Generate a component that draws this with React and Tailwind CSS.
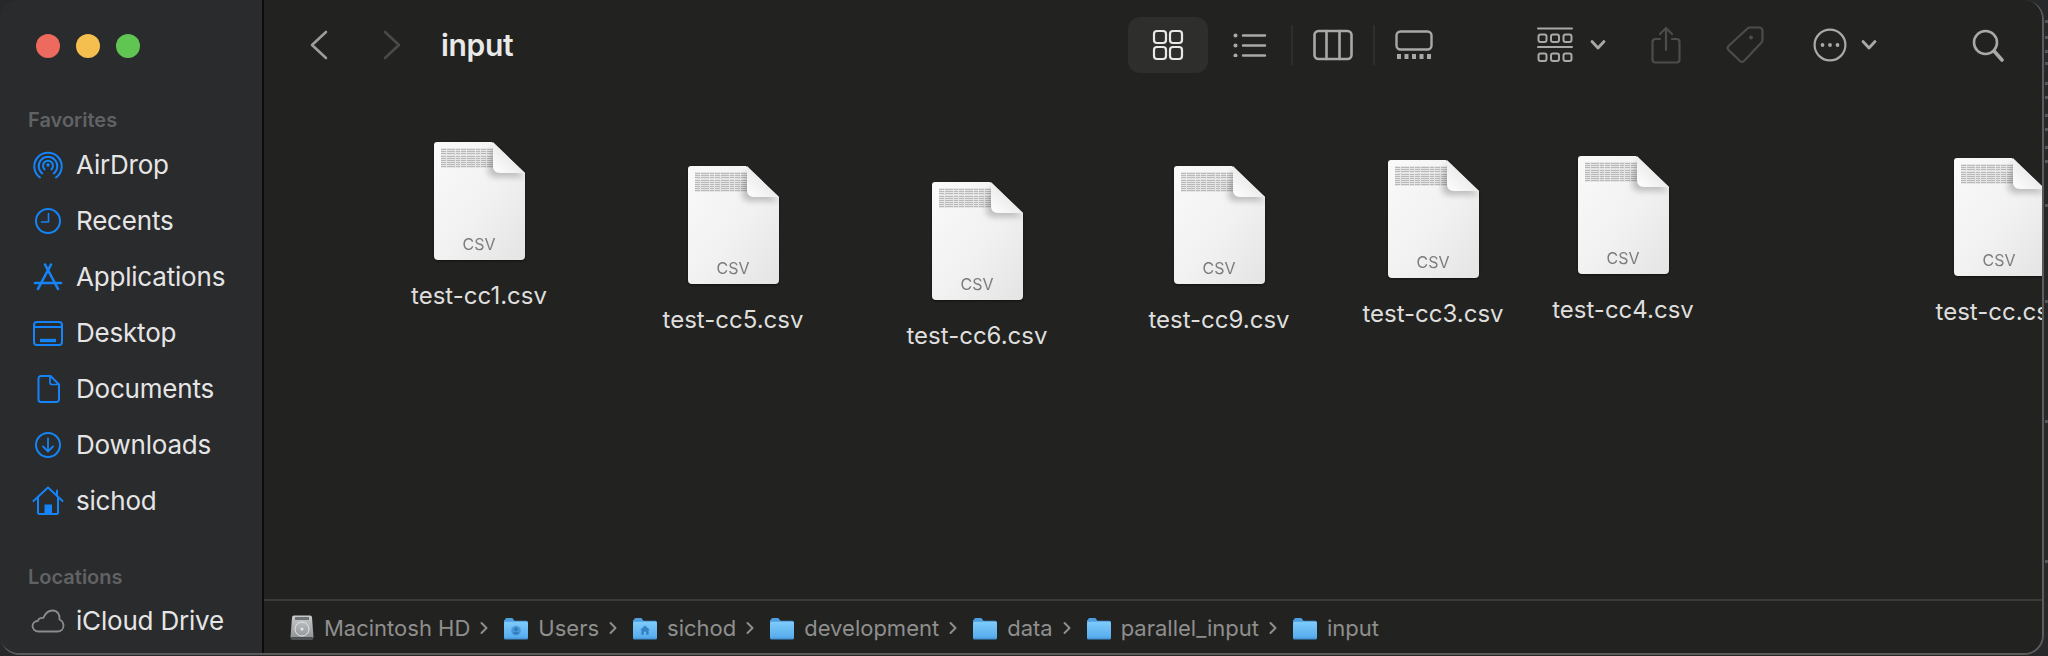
import React from "react";

const BLUE = "#1484f8";
const s = { fill: "none", stroke: "currentColor", strokeLinecap: "round", strokeLinejoin: "round" };

const AirDrop = () => (
  <svg width="30" height="30" viewBox="0 0 30 30" style={{ color: BLUE }} {...s} strokeWidth="2">
    <path d="M7 27.5A13.7 13.7 0 1 1 23 27.5" />
    <path d="M9.3 23.5A9.3 9.3 0 1 1 20.7 23.5" />
    <path d="M11.6 19.4A5 5 0 1 1 18.4 19.4" />
    <circle cx="15" cy="15" r="1.7" fill="currentColor" stroke="none" />
  </svg>
);
const Recents = () => (
  <svg width="30" height="30" viewBox="0 0 30 30" style={{ color: BLUE }} {...s} strokeWidth="2">
    <circle cx="15" cy="15" r="12" />
    <path d="M15.5 7.5V16H8.5" strokeWidth="1.6" />
  </svg>
);
const Apps = () => (
  <svg width="30" height="30" viewBox="0 0 30 30" style={{ color: BLUE }} {...s} strokeWidth="2.6">
    <path d="M12 2.5L24 25" />
    <path d="M18 2.5L6 25" />
    <path d="M2 21H28" />
    <path d="M5 27L6 25" />
    <path d="M25 27L24 25" />
  </svg>
);
const Desktop = () => (
  <svg width="30" height="30" viewBox="0 0 30 30" style={{ color: BLUE }} {...s} strokeWidth="2">
    <rect x="1" y="4" width="28" height="23" rx="3" />
    <path d="M1 9H29" />
    <path d="M7 22.5H23" strokeWidth="3.4" strokeLinecap="butt" />
  </svg>
);
const Doc = () => (
  <svg width="30" height="30" viewBox="0 0 30 30" style={{ color: BLUE }} {...s} strokeWidth="2">
    <path d="M8 2H17.5L26 10.5V25.5A2.5 2.5 0 0 1 23.5 28H8A2.5 2.5 0 0 1 5.5 25.5V4.5A2.5 2.5 0 0 1 8 2Z" />
    <path d="M17 2.5V8.5A2 2 0 0 0 19 10.5H25.5" strokeWidth="1.7" />
  </svg>
);
const Down = () => (
  <svg width="30" height="30" viewBox="0 0 30 30" style={{ color: BLUE }} {...s} strokeWidth="2">
    <circle cx="15" cy="15" r="12" />
    <path d="M15 8.5V21M10 16.5L15 21.5L20 16.5" strokeWidth="1.8" />
  </svg>
);
const Home = () => (
  <svg width="32" height="30" viewBox="0 0 32 30" style={{ color: BLUE }} {...s} strokeWidth="2">
    <path d="M1.5 15L16 1.5L30.5 15" />
    <path d="M25 4.5V10" />
    <path d="M6 12V26.5A1.5 1.5 0 0 0 7.5 28H24.5A1.5 1.5 0 0 0 26 26.5V12" />
    <rect x="12.5" y="18.5" width="7.5" height="9.5" fill="currentColor" stroke="none" />
  </svg>
);
const Cloud = () => (
  <svg width="34" height="26" viewBox="0 0 34 26" style={{ color: "#8b8c8e" }} {...s} strokeWidth="1.8">
    <path d="M7.5 23.5C4 23.5 1.5 21 1.5 18C1.5 15 4 12.8 6.8 13C7.6 10.4 10 9.3 12.2 10C14 6 17 2.5 21.5 2.5C26.5 2.5 29 6.5 28.5 11.5C31 12.8 32.5 15 32.5 17.8C32.5 21 30 23.5 26.5 23.5Z" />
  </svg>
);

const Row = ({ icon, label }) => (
  <div className="h-[56px] flex items-center">
    <div className="w-[76px] flex items-center justify-center pl-[20px] shrink-0">{icon}</div>
    <span className="text-[26px] leading-none text-[#e5e5e6] tracking-[-0.2px]">{label}</span>
  </div>
);

const Heading = ({ children, className }) => (
  <div className={`pl-[28px] text-[20px] leading-[24px] font-semibold text-[#616264] ${className}`}>{children}</div>
);

const Sidebar = () => (
  <aside className="w-[262px] shrink-0 bg-[#2a2b2d] flex flex-col">
    <div className="flex gap-[16px] pl-[36px] pt-[34px]">
      <span className="w-[24px] h-[24px] rounded-full bg-[#ec6a5e]" />
      <span className="w-[24px] h-[24px] rounded-full bg-[#f4bf4f]" />
      <span className="w-[24px] h-[24px] rounded-full bg-[#61c554]" />
    </div>
    <Heading className="mt-[50px]">Favorites</Heading>
    <div className="mt-[5px]">
      <Row icon={<AirDrop />} label="AirDrop" />
      <Row icon={<Recents />} label="Recents" />
      <Row icon={<Apps />} label="Applications" />
      <Row icon={<Desktop />} label="Desktop" />
      <Row icon={<Doc />} label="Documents" />
      <Row icon={<Down />} label="Downloads" />
      <Row icon={<Home />} label="sichod" />
    </div>
    <Heading className="mt-[36px]">Locations</Heading>
    <div className="mt-[4px]">
      <Row icon={<Cloud />} label="iCloud Drive" />
    </div>
  </aside>
);

const G = "#a9a9a8";
const Ic = ({ w, h, ml, color = G, sw = 2.4, children }) => (
  <svg width={w} height={h} viewBox={`0 0 ${w} ${h}`} className="shrink-0" style={{ color, marginLeft: ml }} {...s} strokeWidth={sw}>
    {children}
  </svg>
);

const Chev = ({ ml }) => (
  <Ic w={16} h={12} ml={ml} sw={2.8}>
    <path d="M2 2.5L8 9L14 2.5" />
  </Ic>
);

const Sep = ({ ml }) => <span className="w-[2px] h-[40px] bg-[#2e2e2d] shrink-0" style={{ marginLeft: ml }} />;

const Toolbar = () => (
  <div className="h-[90px] shrink-0 flex items-center relative">
    <Ic w={20} h={30} ml={45} color="#9c9c9b" sw={2.6}><path d="M17 2L3 15L17 28" /></Ic>
    <Ic w={20} h={30} ml={53} color="#4a4a49" sw={2.6}><path d="M3 2L17 15L3 28" /></Ic>
    <span className="ml-[39px] text-[30px] leading-none font-semibold text-[#e9e9e8] tracking-[-0.3px]">input</span>
    <div className="ml-[615px] w-[80px] h-[56px] rounded-[12px] bg-[#2e2e2d] flex items-center justify-center shrink-0">
      <Ic w={32} h={32} color="#e8e8e7" sw={2.2}>
        <rect x="2" y="2" width="12" height="12" rx="3" />
        <rect x="18" y="2" width="12" height="12" rx="3" />
        <rect x="2" y="18" width="12" height="12" rx="3" />
        <rect x="18" y="18" width="12" height="12" rx="3" />
      </Ic>
    </div>
    <Ic w={34} h={24} ml={25}>
      <circle cx="2.5" cy="2.5" r="2" fill="currentColor" stroke="none" />
      <circle cx="2.5" cy="12.5" r="2" fill="currentColor" stroke="none" />
      <circle cx="2.5" cy="22.5" r="2" fill="currentColor" stroke="none" />
      <path d="M10 2.5H32M10 12.5H32M10 22.5H32" />
    </Ic>
    <Sep ml={24} />
    <Ic w={40} h={32} ml={20} sw={2.6}>
      <rect x="1.5" y="2" width="37" height="28" rx="4" />
      <path d="M13.5 2V30M26.5 2V30" />
    </Ic>
    <Sep ml={20} />
    <Ic w={38} h={30} ml={20} sw={2.4}>
      <rect x="1.5" y="1.5" width="35" height="18" rx="4" />
      <path d="M2 26.5H6M9.5 26.5H13.5M17 26.5H21M24.5 26.5H28.5M32 26.5H36" strokeWidth="5" strokeLinecap="butt" />
    </Ic>
    <Ic w={36} h={36} ml={104} sw={2}>
      <path d="M1 1.5H35M1 20H35" />
      <rect x="1.5" y="7.5" width="8" height="7.5" rx="2" />
      <rect x="14" y="7.5" width="8" height="7.5" rx="2" />
      <rect x="26.5" y="7.5" width="8" height="7.5" rx="2" />
      <rect x="1.5" y="26.5" width="8" height="7.5" rx="2" />
      <rect x="14" y="26.5" width="8" height="7.5" rx="2" />
      <rect x="26.5" y="26.5" width="8" height="7.5" rx="2" />
    </Ic>
    <Chev ml={17} />
    <Ic w={30} h={38} ml={45} color="#4c4c4b" sw={2.2}>
      <path d="M9 13H4.5A3 3 0 0 0 1.5 16V33.5A3 3 0 0 0 4.5 36.5H25.5A3 3 0 0 0 28.5 33.5V16A3 3 0 0 0 25.5 13H21" />
      <path d="M15 24V2.5M9 8L15 2L21 8" />
    </Ic>
    <Ic w={38} h={38} ml={45} color="#4c4c4b" sw={2.2}>
      <path d="M24 1.5H33A3.5 3.5 0 0 1 36.5 5V14A3.5 3.5 0 0 1 35.5 16.5L18 35A3 3 0 0 1 14 35L2.5 24A3 3 0 0 1 2.5 20L21.5 2.5A3.5 3.5 0 0 1 24 1.5Z" />
      <circle cx="25" cy="11.5" r="2" fill="currentColor" stroke="none" />
    </Ic>
    <Ic w={34} h={34} ml={49} sw={2.2}>
      <circle cx="17" cy="17" r="15.4" />
      <circle cx="9.5" cy="17" r="1.9" fill="currentColor" stroke="none" />
      <circle cx="17" cy="17" r="1.9" fill="currentColor" stroke="none" />
      <circle cx="24.5" cy="17" r="1.9" fill="currentColor" stroke="none" />
    </Ic>
    <Chev ml={14} />
    <Ic w={32} h={33} ml={95} sw={2.6}>
      <circle cx="13.5" cy="13.5" r="11.5" />
      <path d="M22 22L30 31" strokeWidth="3.6" />
    </Ic>
  </div>
);

const CsvIcon = () => (
  <div className="relative w-[91px] h-[118px]">
    <svg width="91" height="118" viewBox="0 0 91 118" className="block">
      <defs>
        <linearGradient id="pg" x1="0" y1="0" x2="1" y2="1">
          <stop offset="0" stopColor="#fafafa" />
          <stop offset="0.55" stopColor="#f1f1f1" />
          <stop offset="1" stopColor="#e4e4e4" />
        </linearGradient>
        <linearGradient id="fg" x1="0" y1="1" x2="1" y2="0">
          <stop offset="0" stopColor="#ffffff" />
          <stop offset="1" stopColor="#dadada" />
        </linearGradient>
        <filter id="bl" x="-30%" y="-30%" width="160%" height="160%"><feGaussianBlur stdDeviation="3" /></filter>
        <filter id="soft" x="-5%" y="-20%" width="110%" height="140%"><feGaussianBlur stdDeviation="0.45" /></filter>
        <clipPath id="pc">
          <path d="M3 0H58L91 31V114A4 4 0 0 1 87 118H4A4 4 0 0 1 0 114V3A3 3 0 0 1 3 0Z" />
        </clipPath>
      </defs>
      <path d="M3 0H58L91 31V114A4 4 0 0 1 87 118H4A4 4 0 0 1 0 114V3A3 3 0 0 1 3 0Z" fill="url(#pg)" />
      <g clipPath="url(#pc)">
        <g filter="url(#soft)">
          <g fill="#d6d6d6" opacity="0.5"><rect x="7" y="6" width="52" height="20" /></g>
          <g stroke="#b4b4b4" strokeWidth="1" opacity="0.9">
            {[7, 9, 11, 14, 16, 18, 20, 22, 24].map((y) => (
              <path key={y} d={`M7 ${y + 0.5}H59`} strokeDasharray="5 1 8 1 4 1" />
            ))}
          </g>
        </g>
        <path d="M59 4L91 35H62Q56 35 54 30Z" fill="#000" opacity="0.22" filter="url(#bl)" />
      </g>
      <path d="M59 0L91 31H66Q59 31 59 24Z" fill="url(#fg)" />
    </svg>
    <span className="absolute left-0 right-0 bottom-[8px] text-center text-[16px] leading-none text-[#7c7c7c]">CSV</span>
  </div>
);

const files = [
  ["test-cc1.csv", 434, 142],
  ["test-cc5.csv", 688, 166],
  ["test-cc6.csv", 932, 182],
  ["test-cc9.csv", 1174, 166],
  ["test-cc3.csv", 1388, 160],
  ["test-cc4.csv", 1578, 156],
  ["test-cc.csv", 1954, 158],
];

const FileItem = ({ name, x, y }) => (
  <div className="absolute w-[200px] flex flex-col items-center" style={{ left: x - 264 - 55, top: y - 90 }}>
    <div className="drop-shadow-[0_1px_1px_rgba(0,0,0,0.5)]"><CsvIcon /></div>
    <span className="mt-[23px] text-[24px] leading-[26px] text-[#dededd] whitespace-nowrap">{name}</span>
  </div>
);

const Folder = ({ glyph }) => (
  <svg width="24" height="24" viewBox="0 0 23 23" className="shrink-0">
    <defs>
      <linearGradient id="fd" x1="0" y1="0" x2="0" y2="1">
        <stop offset="0" stopColor="#7fcbfb" />
        <stop offset="0.85" stopColor="#58aeee" />
        <stop offset="1" stopColor="#3f8fd2" />
      </linearGradient>
    </defs>
    <path d="M1 3.5A1.5 1.5 0 0 1 2.5 2H8L10 4.5H21.5A1.5 1.5 0 0 1 23 6V9H0V4Z" fill="#4f9fe0" />
    <rect x="0" y="5.5" width="23" height="17" rx="1.5" fill="url(#fd)" />
    {glyph === "user" && (
      <g fill="#2e78bc">
        <circle cx="11.5" cy="14" r="4.6" opacity="0.55" />
        <circle cx="11.5" cy="12.8" r="1.7" />
        <path d="M8.6 17.2a3 2.4 0 0 1 5.8 0Z" />
      </g>
    )}
    {glyph === "home" && (
      <path d="M11.5 9L6.8 13.5H8V18H10.4V15H12.6V18H15V13.5H16.2Z" fill="#2e78bc" opacity="0.85" />
    )}
  </svg>
);

const Disk = () => (
  <svg width="24" height="26" viewBox="0 0 24 26" className="shrink-0">
    <defs>
      <linearGradient id="dk" x1="0" y1="0" x2="0" y2="1">
        <stop offset="0" stopColor="#c9ccce" />
        <stop offset="1" stopColor="#8d9194" />
      </linearGradient>
    </defs>
    <path d="M4 0.5H20A2 2 0 0 1 22 2.5L23.5 22A2 2 0 0 1 21.5 24H2.5A2 2 0 0 1 0.5 22L2 2.5A2 2 0 0 1 4 0.5Z" fill="url(#dk)" />
    <rect x="5" y="2" width="14" height="3" rx="0.5" fill="#6f7376" />
    <circle cx="12" cy="14" r="7" fill="none" stroke="#e2e4e5" strokeWidth="1" />
    <circle cx="12" cy="14" r="1.6" fill="#e2e4e5" />
    <rect x="1" y="22" width="22" height="3" rx="1" fill="#4e5153" />
  </svg>
);

const Crumb = ({ icon, label, last }) => (
  <>
    {icon}
    <span className="ml-[10px] text-[22px] leading-none text-[#8f8f8e]">{label}</span>
    {!last && (
      <svg width="8" height="14" viewBox="0 0 8 14" className="ml-[10px] mr-[16px] shrink-0" style={{ color: "#8f8f8e" }} {...s} strokeWidth="2">
        <path d="M1.5 2L6.5 7L1.5 12" />
      </svg>
    )}
  </>
);

const PathBar = () => (
  <div className="h-[54px] shrink-0 border-t-2 border-[#3a3a39] flex items-center pl-[26px] pt-[1px]">
    <Crumb icon={<Disk />} label="Macintosh HD" />
    <Crumb icon={<Folder glyph="user" />} label="Users" />
    <Crumb icon={<Folder glyph="home" />} label="sichod" />
    <Crumb icon={<Folder />} label="development" />
    <Crumb icon={<Folder />} label="data" />
    <Crumb icon={<Folder />} label="parallel_input" />
    <Crumb icon={<Folder />} label="input" last />
  </div>
);

const marks = [20, 36, 50, 62, 82, 96, 114, 128, 146, 160, 204, 300, 420, 560];

export default function App() {
  return (
    <div className="relative w-[2048px] h-[656px] overflow-hidden bg-[#27282a]" style={{ fontFamily: "Inter, 'Liberation Sans', sans-serif" }}>
      {marks.map((y) => (
        <span key={y} className="absolute right-0 w-[3px] h-[3px] bg-[#55565a]" style={{ top: y }} />
      ))}
      <div className="w-[2044px] h-[655px] rounded-[20px] overflow-hidden flex border-r-2 border-b-2 border-[#5b5b5a]">
        <Sidebar />
        <main className="flex-1 min-w-0 flex flex-col bg-[#222220] border-l-2 border-[#0b0b0b]">
          <Toolbar />
          <div className="relative flex-1 overflow-hidden">
            {files.map(([name, x, y]) => (
              <FileItem key={name} name={name} x={x} y={y} />
            ))}
          </div>
          <PathBar />
        </main>
      </div>
    </div>
  );
}
